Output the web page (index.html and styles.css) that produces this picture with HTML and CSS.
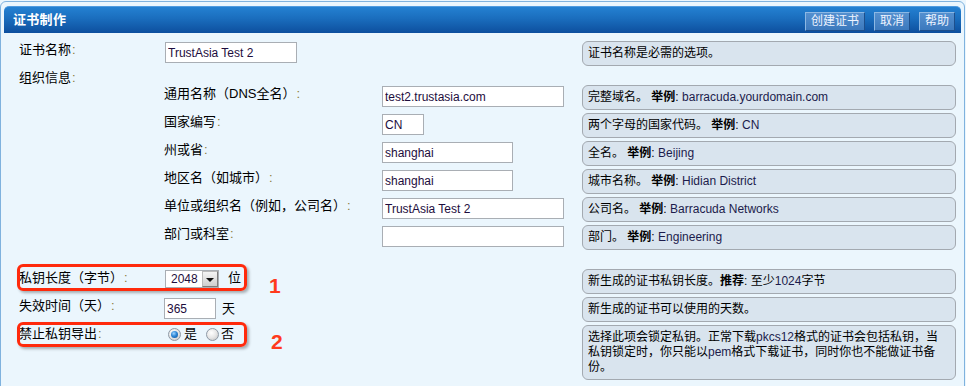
FILE: index.html
```html
<!DOCTYPE html>
<html lang="zh-CN">
<head>
<meta charset="utf-8">
<title>证书制作</title>
<link rel="stylesheet" href="styles.css">
</head>
<body>
<div class="page">
  <div class="frame">
    <div class="panel">
      <div class="header">
        <h1 class="title">证书制作</h1>
        <div class="actions">
          <button class="btn">创建证书</button>
          <button class="btn">取消</button>
          <button class="btn">帮助</button>
        </div>
      </div>
      <div class="form">
        <div class="row">
          <label class="lbl c1">证书名称<span class="colon">:</span></label>
          <div class="field top-field"><input class="inp w132" value="TrustAsia Test 2"></div>
          <div class="c3"></div>
          <div class="help">证书名称是必需的选项。</div>
        </div>
        <div class="row group">
          <label class="lbl c1">组织信息<span class="colon">:</span></label>
        </div>
        <div class="row">
          <div class="c1"></div>
          <label class="lbl">通用名称（DNS全名）<span class="colon">:</span></label>
          <div class="field"><input class="inp w182" value="test2.trustasia.com"></div>
          <div class="help">完整域名。 <b>举例</b>: <span class="ex">barracuda.yourdomain.com</span></div>
        </div>
        <div class="row">
          <div class="c1"></div>
          <label class="lbl">国家编写<span class="colon">:</span></label>
          <div class="field"><input class="inp w42" value="CN"></div>
          <div class="help">两个字母的国家代码。 <b>举例</b>: <span class="ex">CN</span></div>
        </div>
        <div class="row">
          <div class="c1"></div>
          <label class="lbl">州或省<span class="colon">:</span></label>
          <div class="field"><input class="inp w131" value="shanghai"></div>
          <div class="help">全名。 <b>举例</b>: <span class="ex">Beijing</span></div>
        </div>
        <div class="row">
          <div class="c1"></div>
          <label class="lbl">地区名（如城市）<span class="colon">:</span></label>
          <div class="field"><input class="inp w131" value="shanghai"></div>
          <div class="help">城市名称。 <b>举例</b>: <span class="ex">Hidian District</span></div>
        </div>
        <div class="row">
          <div class="c1"></div>
          <label class="lbl">单位或组织名（例如，公司名）<span class="colon">:</span></label>
          <div class="field"><input class="inp w182" value="TrustAsia Test 2"></div>
          <div class="help">公司名。 <b>举例</b>: <span class="ex">Barracuda Networks</span></div>
        </div>
        <div class="row">
          <div class="c1"></div>
          <label class="lbl">部门或科室<span class="colon">:</span></label>
          <div class="field"><input class="inp w182" value=""></div>
          <div class="help">部门。 <b>举例</b>: <span class="ex">Engineering</span></div>
        </div>
        <div class="spacer"></div>
        <div class="row">
          <label class="lbl c1">私钥长度（字节）<span class="colon">:</span></label>
          <div class="field wide">
            <span class="select">
              <select class="sel"><option>2048</option><option>1024</option></select>
              <span class="arrow"></span>
            </span>
            <span class="unit u-bit">位</span>
          </div>
          <div class="help">新生成的证书私钥长度。<b>推荐</b>: 至少<span class="ex">1024</span>字节</div>
        </div>
        <div class="row">
          <label class="lbl c1">失效时间（天）<span class="colon">:</span></label>
          <div class="field wide">
            <input class="inp w52" value="365">
            <span class="unit u-day">天</span>
          </div>
          <div class="help">新生成的证书可以使用的天数。</div>
        </div>
        <div class="row">
          <label class="lbl c1">禁止私钥导出<span class="colon">:</span></label>
          <div class="field wide radios">
            <label class="opt"><input type="radio" name="lock" class="radio" checked><span>是</span></label>
            <label class="opt opt2"><input type="radio" name="lock" class="radio"><span>否</span></label>
          </div>
          <div class="help">选择此项会锁定私钥。正常下载<span class="ex">pkcs12</span>格式的证书会包括私钥，当私钥锁定时，你只能以<span class="ex">pem</span>格式下载证书，同时你也不能做证书备份。</div>
        </div>
      </div>
    </div>
  </div>
  <div class="mark box1"></div>
  <div class="mark box2"></div>
  <div class="num n1">1</div>
  <div class="num n2">2</div>
</div>
</body>
</html>
```
FILE: styles.css
```css
* { box-sizing: border-box; }
html, body { margin: 0; padding: 0; }
body {
  background: #ebf6fd;
  font-family: "Liberation Sans", "Noto Sans CJK SC", sans-serif;
  font-size: 13px;
  color: #000;
  width: 966px;
  height: 386px;
  overflow: hidden;
}
.page { position: relative; width: 966px; height: 386px; }
.frame {
  margin: 1px 1px 0 0;
  border: 1px solid #7fb2de;
  border-radius: 6px;
  height: 394px;
  padding: 4px 3px 0 3px;
}
.header {
  height: 27px;
  border-radius: 5px 5px 0 0;
  background: linear-gradient(#2481d2 0%, #1a6dbd 45%, #0d4f9e 100%);
  border-top: 1px solid #4f9be0;
  display: flex;
  align-items: flex-start;
  justify-content: space-between;
  padding: 0 6px 0 9px;
}
.title {
  margin: 0;
  font-size: 13px;
  font-weight: bold;
  color: #fff;
  line-height: 26px;
  letter-spacing: 0.3px;
}
.actions { display: flex; gap: 9px; padding-top: 5px; }
.btn {
  height: 19px;
  padding: 0 5px;
  font-family: "Liberation Sans", "Noto Sans CJK SC", sans-serif;
  font-size: 12px;
  line-height: 17px;
  color: #eef4ff;
  background: linear-gradient(#5590cf, #3c79bd);
  border: 1px solid;
  border-color: #8cb8e4 #1d4f8c #1d4f8c #8cb8e4;
  border-radius: 0;
}
.form { padding: 8px 0 0 15px; }
.row {
  display: grid;
  grid-template-columns: 145px 218px 200px 374px;
  align-items: start;
  margin-bottom: 3px;
}
.row.group { height: 16px; margin-bottom: 0; }
.spacer { height: 16px; }
.lbl {
  display: block;
  font-size: 13px;
  line-height: 15px;
  padding-top: 1px;
  white-space: nowrap;
}
.colon { color: #8d7c3a; padding-left: 1px; }
.field { padding-top: 1px; display: flex; align-items: flex-start; }
.field.wide { grid-column: 2 / 4; }
.top-field { padding-left: 1px; }
.inp {
  height: 21px;
  border: 1px solid #a9aeb4;
  background: #fff;
  padding: 0 2px;
  font-family: "Liberation Sans", "Noto Sans CJK SC", sans-serif;
  font-size: 12px;
  color: #1d0d3d;
  outline: none;
}
.w132 { width: 132px; }
.w182 { width: 182px; }
.w42 { width: 42px; }
.w131 { width: 131px; }
.w52 { width: 52px; }
.help {
  grid-column: 4;
  background: #d9e4ee;
  border: 1px solid #a3a9b0;
  border-radius: 6px;
  padding: 4px 15px 4px 5px;
  font-size: 12px;
  line-height: 15px;
  min-height: 25px;
}
.help b { font-weight: bold; }
.ex { color: #1c1c4c; }
.select {
  position: relative;
  display: inline-block;
  width: 54px;
  height: 18px;
  margin-left: 1px;
  border: 1px solid #a9aeb4;
  background: #fff;
}
.sel {
  appearance: none;
  -webkit-appearance: none;
  border: 0;
  background: transparent;
  width: 100%;
  height: 16px;
  padding: 0 0 0 5px;
  font-family: "Liberation Sans", sans-serif;
  font-size: 12px;
  color: #1d0d3d;
  outline: none;
}
.arrow {
  position: absolute;
  right: 0;
  top: 0;
  width: 16px;
  height: 16px;
  background: linear-gradient(#f4f4f4, #cfcfcf);
  border: 1px solid #7d7d7d;
  border-top-color: #bbb;
  border-left-color: #bbb;
}
.arrow::after {
  content: "";
  position: absolute;
  left: 3px;
  top: 6px;
  border-left: 4px solid transparent;
  border-right: 4px solid transparent;
  border-top: 4px solid #111;
}
.unit { font-size: 13px; line-height: 15px; }
.u-bit { margin-left: 9px; }
.u-day { margin-left: 6px; padding-top: 3px; }
.radios { padding-top: 1px; padding-left: 4px; }
.opt { display: flex; align-items: center; font-size: 13px; line-height: 15px; }
.opt span { margin-left: 3px; }
.opt2 { margin-left: 9px; }
.opt2 span { margin-left: 2px; }
.radio {
  appearance: none;
  -webkit-appearance: none;
  margin: 2px 0 0 0;
  width: 13px;
  height: 13px;
  border-radius: 50%;
  border: 1px solid #8e99a6;
  background: radial-gradient(circle at 40% 35%, #ffffff 0%, #e6e6e6 50%, #bdbdbd 100%);
  position: relative;
}
.radio:checked::after {
  content: "";
  position: absolute;
  left: 2px;
  top: 2px;
  width: 7px;
  height: 7px;
  border-radius: 50%;
  background: radial-gradient(circle at 40% 35%, #9fd4ff 0%, #2d86d6 45%, #0c4b93 100%);
}
.mark {
  position: absolute;
  border: 3px solid #ff2a0c;
  border-radius: 6px;
  box-shadow: 2px 2px 3px rgba(0, 0, 0, 0.3);
}
.box1 { left: 17px; top: 263px; width: 230px; height: 27px; }
.box2 { left: 17px; top: 321px; width: 230px; height: 25px; }
.num {
  position: absolute;
  font-family: "Liberation Sans", sans-serif;
  font-size: 21px;
  font-weight: bold;
  line-height: 21px;
  color: #ff3a1c;
}
.n1 { left: 269px; top: 274px; }
.n2 { left: 271px; top: 330px; }
```
